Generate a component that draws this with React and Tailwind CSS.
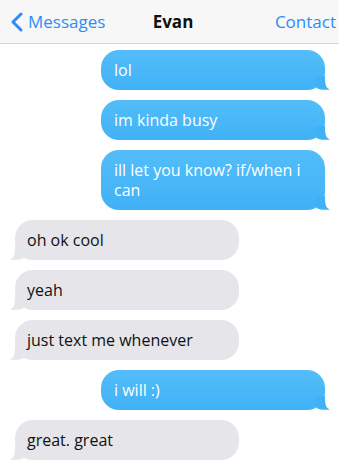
import React from "react";

const messages = [
  { from: "me", text: "lol" },
  { from: "me", text: "im kinda busy" },
  { from: "me", text: "ill let you know? if/when i can" },
  { from: "them", text: "oh ok cool" },
  { from: "them", text: "yeah" },
  { from: "them", text: "just text me whenever" },
  { from: "me", text: "i will :)" },
  { from: "them", text: "great. great" },
];

const Tail = ({ side, color }) => (
  <svg
    width="14"
    height="14"
    viewBox="0 0 14 14"
    className={
      side === "me"
        ? "absolute bottom-0 right-[-5px]"
        : "absolute bottom-0 left-[-5px] -scale-x-100"
    }
  >
    <path d="M0 0 C1 6 2 10 0 12 C4 14 10 14 14 13.5 C10 12 9 9 9 0 Z" fill={color} />
  </svg>
);

const Bubble = ({ from, text }) => {
  const mine = from === "me";
  return (
    <div className={mine ? "flex justify-end pr-[14px]" : "flex justify-start pl-[15px]"}>
      <div
        className={
          mine
            ? "relative w-[224px] rounded-[18px] bg-gradient-to-b from-[#52bdf9] to-[#41b1f6] px-[13px] py-[10px] text-[16px] leading-[20px] text-white"
            : "relative w-[224px] rounded-[18px] bg-[#e5e5ea] px-[12px] py-[10px] text-[16px] leading-[20px] text-[#111]"
        }
      >
        {text}
        <Tail side={from} color={mine ? "#41b1f6" : "#e5e5ea"} />
      </div>
    </div>
  );
};

const App = () => {
  return (
    <div className="w-[339px] h-[461px] overflow-hidden bg-white" style={{ fontFamily: '"Open Sans", sans-serif' }}>
      <div className="h-[44px] grid grid-cols-3 items-center bg-[#f7f7f7] border-b border-[#d6d6d6] pl-[10px] pr-[3px]">
        <div className="flex items-center gap-[5px] text-[#2d8cf7] text-[17px] whitespace-nowrap">
          <svg width="13" height="20" viewBox="0 0 13 20">
            <polyline points="11,2 3,10 11,18" fill="none" stroke="#2d8cf7" strokeWidth="3" strokeLinecap="round" strokeLinejoin="round" />
          </svg>
          <span>Messages</span>
        </div>
        <span className="font-bold text-[17px] text-[#111] text-center">Evan</span>
        <span className="text-[#2d8cf7] text-[17px] text-right">Contact</span>
      </div>
      <div className="flex flex-col gap-[10px] pt-[6px]">
        {messages.map((m, i) => (
          <Bubble key={i} from={m.from} text={m.text} />
        ))}
      </div>
    </div>
  );
};

export default App;
